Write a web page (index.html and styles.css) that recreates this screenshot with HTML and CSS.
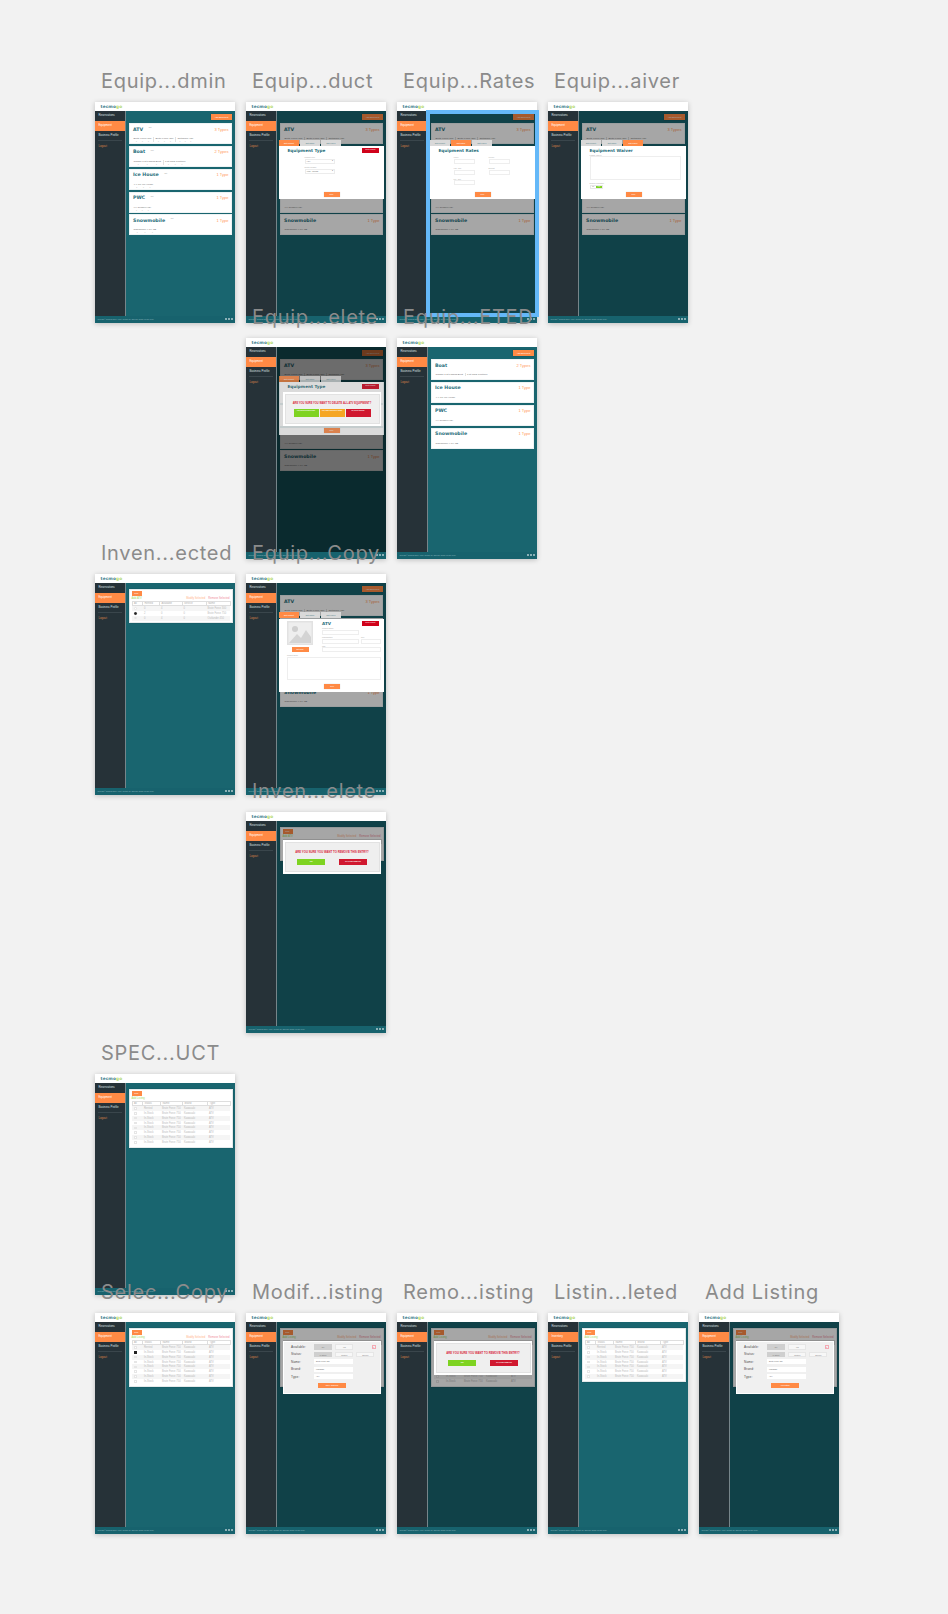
FILE: index.html
```html
<!DOCTYPE html>
<html lang="en">
<head>
<meta charset="utf-8">
<title>Artboards</title>
<link rel="stylesheet" href="styles.css">
</head>
<body>
<div class="canvas">

<article class="art r1 c1"><div class="lab">Equip...dmin</div><div class="board">
<div class="hdr"><span class="logo">tecmo<em>go</em></span></div>
<div class="body"><nav class="side"><a class="it">Reservations</a><a class="it on">Equipment</a><a class="it">Business Profile</a><hr><a class="it out">Logout</a></nav>
<main class="main"><div class="tool"><span class="add">Add Equipment</span></div>
<section class="card"><div class="ch"><h3>ATV <small>Edit</small></h3><b>3 Types</b></div><div class="items"><div class="item"><p>Brute Force 300</p><p class="num"><i>1</i><i>1</i><i>1</i></p></div><div class="item"><p>Brute Force 750</p><p class="num"><i>1</i><i>1</i><i>1</i></p></div><div class="item"><p>Outlander 450</p><p class="num"><i>1</i><i>1</i><i>1</i></p></div></div></section>
<section class="card"><div class="ch"><h3>Boat <small>Edit</small></h3><b>2 Types</b></div><div class="items"><div class="item"><p>Classic 14ft Fishing Boat</p><p class="num"><i>1</i><i>1</i><i>1</i></p></div><div class="item"><p>14ft PRO Pontoon</p><p class="num"><i>1</i><i>1</i><i>1</i></p></div></div></section>
<section class="card"><div class="ch"><h3>Ice House <small>Edit</small></h3><b>1 Type</b></div><div class="items"><div class="item"><p>4' x 10' Ice House</p><p class="num"><i>1</i><i>1</i><i>1</i></p></div></div></section>
<section class="card"><div class="ch"><h3>PWC <small>Edit</small></h3><b>1 Type</b></div><div class="items"><div class="item"><p>VX Cruiser(HO)</p><p class="num"><i>1</i><i>1</i><i>1</i></p></div></div></section>
<section class="card"><div class="ch"><h3>Snowmobile <small>Edit</small></h3><b>1 Type</b></div><div class="items"><div class="item"><p>Sidewinder X-TX SE</p><p class="num"><i>1</i><i>1</i><i>1</i></p></div></div></section>
</main></div>
<footer class="ftr"><span>Copyright © Tecmogo 2017 | About | Contact Us | Services | Terms | Privacy Policy</span><span class="dots"><i></i><i></i><i></i></span></footer></div></article>

<article class="art r1 c2"><div class="lab">Equip...duct</div><div class="board">
<div class="hdr"><span class="logo">tecmo<em>go</em></span></div>
<div class="body"><nav class="side"><a class="it">Reservations</a><a class="it on">Equipment</a><a class="it">Business Profile</a><hr><a class="it out">Logout</a></nav>
<main class="main"><div class="tool"><span class="add">Add Equipment</span></div>
<section class="card"><div class="ch"><h3>ATV</h3><b>3 Types</b></div><div class="items"><div class="item"><p>Brute Force 300</p></div><div class="item"><p>Brute Force 750</p></div><div class="item"><p>Outlander 450</p></div></div></section>
<section class="card"></section>
<section class="card"></section>
<section class="card"><div class="ch"></div><div class="items"><div class="item"><p>VX Cruiser(HO)</p></div></div></section>
<section class="card"><div class="ch"><h3>Snowmobile</h3><b>1 Type</b></div><div class="items"><div class="item"><p>Sidewinder X-TX SE</p></div></div></section>
<div class="dim"></div>
<div class="tabs"><span class="tab on">Edit Product</span><span class="tab">Edit Rates</span><span class="tab">Edit Waiver</span></div>
<div class="modal"><div class="mh"><h4>Equipment Type</h4><span class="del">Delete Product</span></div>
<div class="stack"><label>Product Type<span class="sel">ATV<u>▾</u></span></label><label>Rental Season<span class="sel">Year - Round<u>▾</u></span></label></div>
<span class="save">Save</span></div>
</main></div>
<footer class="ftr"><span>Copyright © Tecmogo 2017 | About | Contact Us | Services | Terms | Privacy Policy</span><span class="dots"><i></i><i></i><i></i></span></footer></div></article>

<article class="art r1 c3"><div class="lab">Equip...Rates</div><div class="board">
<div class="hdr"><span class="logo">tecmo<em>go</em></span></div>
<div class="body"><nav class="side"><a class="it">Reservations</a><a class="it on">Equipment</a><a class="it">Business Profile</a><hr><a class="it out">Logout</a></nav>
<main class="main"><div class="tool"><span class="add">Add Equipment</span></div>
<section class="card"><div class="ch"><h3>ATV</h3><b>3 Types</b></div><div class="items"><div class="item"><p>Brute Force 300</p></div><div class="item"><p>Brute Force 750</p></div><div class="item"><p>Outlander 450</p></div></div></section>
<section class="card"></section>
<section class="card"></section>
<section class="card"><div class="ch"></div><div class="items"><div class="item"><p>VX Cruiser(HO)</p></div></div></section>
<section class="card"><div class="ch"><h3>Snowmobile</h3><b>1 Type</b></div><div class="items"><div class="item"><p>Sidewinder X-TX SE</p></div></div></section>
<div class="dim"></div>
<div class="tabs"><span class="tab">Edit Product</span><span class="tab on">Edit Rates</span><span class="tab">Edit Waiver</span></div>
<div class="modal"><div class="mh"><h4>Equipment Rates</h4></div>
<div class="rates"><label>Hourly<span class="inp"></span></label><label>Weekly<span class="inp"></span></label><label>Half - Day<span class="inp"></span></label><label>Deposit<span class="inp"></span></label><label>Full - Day<span class="inp"></span></label></div>
<span class="save">Save</span></div>
</main></div>
<footer class="ftr"><span>Copyright © Tecmogo 2017 | About | Contact Us | Services | Terms | Privacy Policy</span><span class="dots"><i></i><i></i><i></i></span></footer></div></article>

<article class="art r1 c4"><div class="lab">Equip...aiver</div><div class="board">
<div class="hdr"><span class="logo">tecmo<em>go</em></span></div>
<div class="body"><nav class="side"><a class="it">Reservations</a><a class="it on">Equipment</a><a class="it">Business Profile</a><hr><a class="it out">Logout</a></nav>
<main class="main"><div class="tool"><span class="add">Add Equipment</span></div>
<section class="card"><div class="ch"><h3>ATV</h3><b>3 Types</b></div><div class="items"><div class="item"><p>Brute Force 300</p></div><div class="item"><p>Brute Force 750</p></div><div class="item"><p>Outlander 450</p></div></div></section>
<section class="card"></section>
<section class="card"></section>
<section class="card"><div class="ch"></div><div class="items"><div class="item"><p>VX Cruiser(HO)</p></div></div></section>
<section class="card"><div class="ch"><h3>Snowmobile</h3><b>1 Type</b></div><div class="items"><div class="item"><p>Sidewinder X-TX SE</p></div></div></section>
<div class="dim"></div>
<div class="tabs"><span class="tab">Edit Product</span><span class="tab">Edit Rates</span><span class="tab on">Edit Waiver</span></div>
<div class="modal"><div class="mh"><h4>Equipment Waiver</h4></div>
<div class="waiver"><label>Liability Waiver<span class="area"></span></label><label>Require Signature<span class="tog"><span>No</span><span class="yes">Yes</span></span></label></div>
<span class="save">Save</span></div>
</main></div>
<footer class="ftr"><span>Copyright © Tecmogo 2017 | About | Contact Us | Services | Terms | Privacy Policy</span><span class="dots"><i></i><i></i><i></i></span></footer></div></article>

<div class="frame"></div>

<article class="art r2 c2"><div class="lab">Equip...elete</div><div class="board">
<div class="hdr"><span class="logo">tecmo<em>go</em></span></div>
<div class="body"><nav class="side"><a class="it">Reservations</a><a class="it on">Equipment</a><a class="it">Business Profile</a><hr><a class="it out">Logout</a></nav>
<main class="main"><div class="tool"><span class="add">Add Equipment</span></div>
<section class="card"><div class="ch"><h3>ATV</h3><b>3 Types</b></div><div class="items"><div class="item"><p>Brute Force 300</p></div><div class="item"><p>Brute Force 750</p></div><div class="item"><p>Outlander 450</p></div></div></section>
<section class="card"></section>
<section class="card"></section>
<section class="card"><div class="ch"></div><div class="items"><div class="item"><p>VX Cruiser(HO)</p></div></div></section>
<section class="card"><div class="ch"><h3>Snowmobile</h3><b>1 Type</b></div><div class="items"><div class="item"><p>Sidewinder X-TX SE</p></div></div></section>
<div class="dim"></div><div class="dim"></div>
<div class="tabs faded"><span class="tab on">Edit Product</span><span class="tab">Edit Rates</span><span class="tab">Edit Waiver</span></div>
<div class="modal faded"><div class="mh"><h4>Equipment Type</h4><span class="del">Delete Product</span></div>
<span class="save">Save</span></div>
<div class="confirm three"><div class="in"><p>ARE YOU SURE YOU WANT TO DELETE ALL ATV EQUIPMENT?</p><div class="acts"><span class="g">YES, DELETE EVERYTHING</span><span class="o">YES, KEEP INDIVIDUAL ITEMS</span><span class="x">NO, DON'T DELETE</span></div></div></div>
</main></div>
<footer class="ftr"><span>Copyright © Tecmogo 2017 | About | Contact Us | Services | Terms | Privacy Policy</span><span class="dots"><i></i><i></i><i></i></span></footer></div></article>

<article class="art r2 c3"><div class="lab">Equip...ETED</div><div class="board">
<div class="hdr"><span class="logo">tecmo<em>go</em></span></div>
<div class="body"><nav class="side"><a class="it">Reservations</a><a class="it on">Equipment</a><a class="it">Business Profile</a><hr><a class="it out">Logout</a></nav>
<main class="main"><div class="tool"><span class="add">Add Equipment</span></div>
<section class="card"><div class="ch"><h3>Boat</h3><b>2 Types</b></div><div class="items"><div class="item"><p>Classic 14ft Fishing Boat</p></div><div class="item"><p>14ft PRO Pontoon</p></div></div></section>
<section class="card"><div class="ch"><h3>Ice House</h3><b>1 Type</b></div><div class="items"><div class="item"><p>4' x 10' Ice House</p></div></div></section>
<section class="card"><div class="ch"><h3>PWC</h3><b>1 Type</b></div><div class="items"><div class="item"><p>VX Cruiser(HO)</p></div></div></section>
<section class="card"><div class="ch"><h3>Snowmobile</h3><b>1 Type</b></div><div class="items"><div class="item"><p>Sidewinder X-TX SE</p></div></div></section>
</main></div>
<footer class="ftr"><span>Copyright © Tecmogo 2017 | About | Contact Us | Services | Terms | Privacy Policy</span><span class="dots"><i></i><i></i><i></i></span></footer></div></article>

<article class="art r3 c1"><div class="lab">Inven...ected</div><div class="board">
<div class="hdr"><span class="logo">tecmo<em>go</em></span></div>
<div class="body"><nav class="side"><a class="it">Reservations</a><a class="it on">Equipment</a><a class="it">Business Profile</a><hr><a class="it out">Logout</a></nav>
<main class="main mlist"><section class="sheet"><span class="back">Back</span>
<div class="ops"><span class="addl">Add ATV</span><span class="mod">Modify Selected</span><span class="rem">Remove Selected</span></div>
<table class="tbl"><tr><th>All</th><th>Rented</th><th>Available</th><th>Service</th><th>Name</th></tr>
<tr><td><i class="rad"></i></td><td>0</td><td>4</td><td>0</td><td>Brute Force 300</td></tr>
<tr><td><i class="rad sel-on"></i></td><td>2</td><td>0</td><td>0</td><td>Brute Force 750</td></tr>
<tr><td><i class="rad"></i></td><td>0</td><td>4</td><td>0</td><td>Outlander 450</td></tr></table></section></main></div>
<footer class="ftr"><span>Copyright © Tecmogo 2017 | About | Contact Us | Services | Terms | Privacy Policy</span><span class="dots"><i></i><i></i><i></i></span></footer></div></article>

<article class="art r3 c2"><div class="lab">Equip...Copy</div><div class="board">
<div class="hdr"><span class="logo">tecmo<em>go</em></span></div>
<div class="body"><nav class="side"><a class="it">Reservations</a><a class="it on">Equipment</a><a class="it">Business Profile</a><hr><a class="it out">Logout</a></nav>
<main class="main"><div class="tool"><span class="add">Add Equipment</span></div>
<section class="card"><div class="ch"><h3>ATV</h3><b>3 Types</b></div><div class="items"><div class="item"><p>Brute Force 300</p></div><div class="item"><p>Brute Force 750</p></div><div class="item"><p>Outlander 450</p></div></div></section>
<section class="card"></section>
<section class="card"></section>
<section class="card"></section>
<section class="card"><div class="ch"><h3>Snowmobile</h3><b>1 Type</b></div><div class="items"><div class="item"><p>Sidewinder X-TX SE</p></div></div></section>
<div class="dim"></div>
<div class="tabs"><span class="tab on">Edit Product</span><span class="tab">Edit Rates</span><span class="tab">Edit Waiver</span></div>
<div class="modal tall"><div class="prod"><div class="pic"><svg viewBox="0 0 26 24" class="ph"><rect width="26" height="24" fill="#e2e2e2"/><rect x="1.5" y="1.5" width="23" height="21" fill="#eeeeee"/><circle cx="8" cy="8" r="3" fill="#cfcfcf"/><path d="M2 22 L10 13 L14 17 L19 9 L24 16 V22 Z" fill="#d4d4d4"/></svg><span class="edit">Edit Image</span></div>
<div class="pform"><div class="mh"><h4>ATV</h4><span class="del">Delete Product</span></div>
<label>Product Name<span class="inp wide"></span></label>
<div class="two"><label>Manufacturer<span class="inp"></span></label><label>QTY<span class="inp"></span></label></div>
<label>URL<span class="inp"></span></label></div></div>
<label class="desc">Product Desc<span class="area"></span></label>
<span class="save">Save</span></div>
</main></div>
<footer class="ftr"><span>Copyright © Tecmogo 2017 | About | Contact Us | Services | Terms | Privacy Policy</span><span class="dots"><i></i><i></i><i></i></span></footer></div></article>

<article class="art r4 c2"><div class="lab">Inven...elete</div><div class="board">
<div class="hdr"><span class="logo">tecmo<em>go</em></span></div>
<div class="body"><nav class="side"><a class="it">Reservations</a><a class="it on">Equipment</a><a class="it">Business Profile</a><hr><a class="it out">Logout</a></nav>
<main class="main mlist"><section class="sheet"><span class="back">Back</span>
<div class="ops"><span class="addl">Add ATV</span><span class="mod">Modify Selected</span><span class="rem">Remove Selected</span></div>
<table class="tbl"><tr><th>All</th><th>Rented</th><th>Available</th><th>Service</th><th>Name</th></tr>
<tr><td></td><td></td><td></td><td></td><td></td></tr>
<tr><td></td><td></td><td></td><td></td><td></td></tr>
<tr><td></td><td></td><td></td><td></td><td></td></tr></table></section>
<div class="dim"></div>
<div class="confirm"><div class="in"><p>ARE YOU SURE YOU WANT TO REMOVE THIS ENTRY?</p><div class="acts"><span class="g">YES</span><span class="x">NO, DON'T REMOVE</span></div></div></div>
</main></div>
<footer class="ftr"><span>Copyright © Tecmogo 2017 | About | Contact Us | Services | Terms | Privacy Policy</span><span class="dots"><i></i><i></i><i></i></span></footer></div></article>

<article class="art r5 c1"><div class="lab">SPEC...UCT</div><div class="board">
<div class="hdr"><span class="logo">tecmo<em>go</em></span></div>
<div class="body"><nav class="side"><a class="it">Reservations</a><a class="it on">Equipment</a><a class="it">Business Profile</a><hr><a class="it out">Logout</a></nav>
<main class="main mlist"><section class="sheet"><span class="back">Back</span>
<div class="ops"><span class="addl">Add Listing</span></div>
<table class="tbl list"><tr><th>All</th><th>Status</th><th>Name</th><th>Brand</th><th>Type</th></tr>
<tr><td><i class="rad"></i></td><td>Rented</td><td>Brute Force 750</td><td>Kawasaki</td><td>ATV</td></tr>
<tr><td><i class="rad"></i></td><td>In-Stock</td><td>Brute Force 750</td><td>Kawasaki</td><td>ATV</td></tr>
<tr><td><i class="rad"></i></td><td>In-Stock</td><td>Brute Force 750</td><td>Kawasaki</td><td>ATV</td></tr>
<tr><td><i class="rad"></i></td><td>In-Stock</td><td>Brute Force 750</td><td>Kawasaki</td><td>ATV</td></tr>
<tr><td><i class="rad"></i></td><td>In-Stock</td><td>Brute Force 750</td><td>Kawasaki</td><td>ATV</td></tr>
<tr><td><i class="rad"></i></td><td>In-Stock</td><td>Brute Force 750</td><td>Kawasaki</td><td>ATV</td></tr>
<tr><td><i class="rad"></i></td><td>In-Stock</td><td>Brute Force 750</td><td>Kawasaki</td><td>ATV</td></tr>
<tr><td><i class="rad"></i></td><td>In-Stock</td><td>Brute Force 750</td><td>Kawasaki</td><td>ATV</td></tr></table></section></main></div>
<footer class="ftr"><span>Copyright © Tecmogo 2017 | About | Contact Us | Services | Terms | Privacy Policy</span><span class="dots"><i></i><i></i><i></i></span></footer></div></article>

<article class="art r6 c1"><div class="lab">Selec...Copy</div><div class="board">
<div class="hdr"><span class="logo">tecmo<em>go</em></span></div>
<div class="body"><nav class="side"><a class="it">Reservations</a><a class="it on">Equipment</a><a class="it">Business Profile</a><hr><a class="it out">Logout</a></nav>
<main class="main mlist"><section class="sheet"><span class="back">Back</span>
<div class="ops"><span class="addl">Add Listing</span><span class="mod">Modify Selected</span><span class="rem">Remove Selected</span></div>
<table class="tbl list"><tr><th>All</th><th>Status</th><th>Name</th><th>Brand</th><th>Type</th></tr>
<tr><td><i class="rad"></i></td><td>Rented</td><td>Brute Force 750</td><td>Kawasaki</td><td>ATV</td></tr>
<tr><td><i class="rad sel-on"></i></td><td>In-Stock</td><td>Brute Force 750</td><td>Kawasaki</td><td>ATV</td></tr>
<tr><td><i class="rad"></i></td><td>In-Stock</td><td>Brute Force 750</td><td>Kawasaki</td><td>ATV</td></tr>
<tr><td><i class="rad"></i></td><td>In-Stock</td><td>Brute Force 750</td><td>Kawasaki</td><td>ATV</td></tr>
<tr><td><i class="rad"></i></td><td>In-Stock</td><td>Brute Force 750</td><td>Kawasaki</td><td>ATV</td></tr>
<tr><td><i class="rad"></i></td><td>In-Stock</td><td>Brute Force 750</td><td>Kawasaki</td><td>ATV</td></tr>
<tr><td><i class="rad"></i></td><td>In-Stock</td><td>Brute Force 750</td><td>Kawasaki</td><td>ATV</td></tr>
<tr><td><i class="rad"></i></td><td>In-Stock</td><td>Brute Force 750</td><td>Kawasaki</td><td>ATV</td></tr></table></section></main></div>
<footer class="ftr"><span>Copyright © Tecmogo 2017 | About | Contact Us | Services | Terms | Privacy Policy</span><span class="dots"><i></i><i></i><i></i></span></footer></div></article>

<article class="art r6 c2"><div class="lab">Modif...isting</div><div class="board">
<div class="hdr"><span class="logo">tecmo<em>go</em></span></div>
<div class="body"><nav class="side"><a class="it">Reservations</a><a class="it on">Equipment</a><a class="it">Business Profile</a><hr><a class="it out">Logout</a></nav>
<main class="main mlist"><section class="sheet"><span class="back">Back</span>
<div class="ops"><span class="addl">Add Listing</span><span class="mod">Modify Selected</span><span class="rem">Remove Selected</span></div>
<table class="tbl list"><tr><th></th><th></th><th></th><th></th><th></th></tr>
<tr><td></td><td></td><td></td><td></td><td></td></tr>
<tr><td></td><td></td><td></td><td></td><td></td></tr>
<tr><td></td><td></td><td></td><td></td><td></td></tr>
<tr><td></td><td></td><td></td><td></td><td></td></tr>
<tr><td></td><td></td><td></td><td></td><td></td></tr>
<tr><td></td><td></td><td></td><td></td><td></td></tr>
<tr><td></td><td></td><td></td><td></td><td></td></tr>
<tr><td></td><td></td><td></td><td></td><td></td></tr></table></section>
<div class="dim"></div>
<div class="editbox"><span class="close">×</span>
<div class="row"><span class="k">Available:</span><span class="opt on">No</span><span class="opt">Yes</span></div>
<div class="row"><span class="k">Status:</span><span class="opt on">In-Stock</span><span class="opt">Rented</span><span class="opt">Service</span></div>
<div class="row"><span class="k">Name:</span><span class="val">Brute Force 750</span></div>
<div class="row"><span class="k">Brand:</span><span class="val">Kawasaki</span></div>
<div class="row"><span class="k">Type:</span><span class="val">ATV</span></div>
<span class="go">Save Changes</span></div>
</main></div>
<footer class="ftr"><span>Copyright © Tecmogo 2017 | About | Contact Us | Services | Terms | Privacy Policy</span><span class="dots"><i></i><i></i><i></i></span></footer></div></article>

<article class="art r6 c3"><div class="lab">Remo...isting</div><div class="board">
<div class="hdr"><span class="logo">tecmo<em>go</em></span></div>
<div class="body"><nav class="side"><a class="it">Reservations</a><a class="it on">Equipment</a><a class="it">Business Profile</a><hr><a class="it out">Logout</a></nav>
<main class="main mlist"><section class="sheet"><span class="back">Back</span>
<div class="ops"><span class="addl">Add Listing</span><span class="mod">Modify Selected</span><span class="rem">Remove Selected</span></div>
<table class="tbl list"><tr><th></th><th></th><th></th><th></th><th></th></tr>
<tr><td></td><td></td><td></td><td></td><td></td></tr>
<tr><td></td><td></td><td></td><td></td><td></td></tr>
<tr><td></td><td></td><td></td><td></td><td></td></tr>
<tr><td></td><td></td><td></td><td></td><td></td></tr>
<tr><td></td><td></td><td></td><td></td><td></td></tr>
<tr><td></td><td></td><td></td><td></td><td></td></tr>
<tr><td><i class="rad"></i></td><td>In-Stock</td><td>Brute Force 750</td><td>Kawasaki</td><td>ATV</td></tr>
<tr><td><i class="rad"></i></td><td>In-Stock</td><td>Brute Force 750</td><td>Kawasaki</td><td>ATV</td></tr></table></section>
<div class="dim"></div>
<div class="confirm"><div class="in"><p>ARE YOU SURE YOU WANT TO REMOVE THIS ENTRY?</p><div class="acts"><span class="g">YES</span><span class="x">NO, DON'T REMOVE</span></div></div></div>
</main></div>
<footer class="ftr"><span>Copyright © Tecmogo 2017 | About | Contact Us | Services | Terms | Privacy Policy</span><span class="dots"><i></i><i></i><i></i></span></footer></div></article>

<article class="art r6 c4"><div class="lab">Listin...leted</div><div class="board">
<div class="hdr"><span class="logo">tecmo<em>go</em></span></div>
<div class="body"><nav class="side"><a class="it">Reservations</a><a class="it on">Inventory</a><a class="it">Business Profile</a><hr><a class="it out">Logout</a></nav>
<main class="main mlist"><section class="sheet"><span class="back">Back</span>
<div class="ops"><span class="addl">Add Listing</span></div>
<table class="tbl list"><tr><th>All</th><th>Status</th><th>Name</th><th>Brand</th><th>Type</th></tr>
<tr><td><i class="rad"></i></td><td>Rented</td><td>Brute Force 750</td><td>Kawasaki</td><td>ATV</td></tr>
<tr><td><i class="rad"></i></td><td>In-Stock</td><td>Brute Force 750</td><td>Kawasaki</td><td>ATV</td></tr>
<tr><td><i class="rad"></i></td><td>In-Stock</td><td>Brute Force 750</td><td>Kawasaki</td><td>ATV</td></tr>
<tr><td><i class="rad"></i></td><td>In-Stock</td><td>Brute Force 750</td><td>Kawasaki</td><td>ATV</td></tr>
<tr><td><i class="rad"></i></td><td>In-Stock</td><td>Brute Force 750</td><td>Kawasaki</td><td>ATV</td></tr>
<tr><td><i class="rad"></i></td><td>In-Stock</td><td>Brute Force 750</td><td>Kawasaki</td><td>ATV</td></tr>
<tr><td><i class="rad"></i></td><td>In-Stock</td><td>Brute Force 750</td><td>Kawasaki</td><td>ATV</td></tr></table></section></main></div>
<footer class="ftr"><span>Copyright © Tecmogo 2017 | About | Contact Us | Services | Terms | Privacy Policy</span><span class="dots"><i></i><i></i><i></i></span></footer></div></article>

<article class="art r6 c5"><div class="lab">Add Listing</div><div class="board">
<div class="hdr"><span class="logo">tecmo<em>go</em></span></div>
<div class="body"><nav class="side"><a class="it">Reservations</a><a class="it on">Equipment</a><a class="it">Business Profile</a><hr><a class="it out">Logout</a></nav>
<main class="main mlist"><section class="sheet"><span class="back">Back</span>
<div class="ops"><span class="addl">Add Listing</span><span class="mod">Modify Selected</span><span class="rem">Remove Selected</span></div>
<table class="tbl list"><tr><th></th><th></th><th></th><th></th><th></th></tr>
<tr><td></td><td></td><td></td><td></td><td></td></tr>
<tr><td></td><td></td><td></td><td></td><td></td></tr>
<tr><td></td><td></td><td></td><td></td><td></td></tr>
<tr><td></td><td></td><td></td><td></td><td></td></tr>
<tr><td></td><td></td><td></td><td></td><td></td></tr>
<tr><td></td><td></td><td></td><td></td><td></td></tr>
<tr><td></td><td></td><td></td><td></td><td></td></tr>
<tr><td></td><td></td><td></td><td></td><td></td></tr></table></section>
<div class="dim"></div>
<div class="editbox"><span class="close">×</span>
<div class="row"><span class="k">Available:</span><span class="opt on">No</span><span class="opt">Yes</span></div>
<div class="row"><span class="k">Status:</span><span class="opt on">In-Stock</span><span class="opt">Rented</span><span class="opt">Service</span></div>
<div class="row"><span class="k">Name:</span><span class="val">Brute Force 750</span></div>
<div class="row"><span class="k">Brand:</span><span class="val">Kawasaki</span></div>
<div class="row"><span class="k">Type:</span><span class="val">ATV</span></div>
<span class="go">Add Listing</span></div>
</main></div>
<footer class="ftr"><span>Copyright © Tecmogo 2017 | About | Contact Us | Services | Terms | Privacy Policy</span><span class="dots"><i></i><i></i><i></i></span></footer></div></article>

</div>
</body>
</html>
```

FILE: styles.css
```css
* { box-sizing: border-box; margin: 0; padding: 0; }
html, body { width: 948px; height: 1614px; overflow: hidden; }
body { background: #f2f2f2; font-family: "Liberation Sans", Arial, sans-serif; }
.canvas { position: relative; width: 948px; height: 1614px; overflow: hidden; }

/* Artboards sit on a free canvas */
.art { position: absolute; width: 140px; }
.c1 { left: 95px; } .c2 { left: 246px; } .c3 { left: 397px; } .c4 { left: 548px; } .c5 { left: 699px; }
.r1 { top: 69px; } .r2 { top: 305px; } .r3 { top: 541px; } .r4 { top: 779px; } .r5 { top: 1041px; } .r6 { top: 1280px; }

.lab { height: 33px; line-height: 24px; padding-left: 6px; white-space: nowrap; font-family: Inter, sans-serif; font-size: 20px; color: #8b8b8b; letter-spacing: .72px; }
.board { width: 140px; height: 220.5px; display: flex; flex-direction: column; overflow: hidden; background: #19656f; box-shadow: 0 1px 5px rgba(0,0,0,.22); }

.frame { position: absolute; left: 426px; top: 110px; width: 113px; height: 207px; border: 4.5px solid #64b8f8; }

.hdr { height: 9px; flex: none; background: #fff; display: flex; align-items: center; padding-left: 5.5px; }
.logo { font: 700 4.3px "DejaVu Sans", sans-serif; color: #3f808d; letter-spacing: .1px; }
.logo em { font-style: normal; color: #b3d86a; }

.body { flex: 1; display: flex; min-height: 0; }
.side { width: 31px; flex: none; background: #263238; border-right: 1px solid #76858a; }
.it { display: block; height: 9.9px; line-height: 9.9px; padding-left: 3.4px; font-size: 2.8px; font-weight: 400; color: #dde1e2; white-space: nowrap; }
.it.on { background: #ff8a45; color: #fff; }
.it.out { color: #d98449; margin-top: 1.5px; }
.side hr { border: 0; height: 1px; background: #3a464c; margin: -1px 3px 1px 3px; }

.main { flex: 1; position: relative; min-width: 0; background: #19656f; padding: 3px 3px 0 2.5px; display: flex; flex-direction: column; gap: 1.8px; }
.tool { display: flex; justify-content: flex-end; height: 6px; margin-bottom: 1.4px; }
.add { width: 21px; height: 6px; line-height: 6px; background: #ff8a45; color: #fff; font-size: 2px; text-align: center; white-space: nowrap; box-shadow: 0 0 1px rgba(0,0,0,.3); }

.card { height: 21px; flex: none; background: #fff; padding: 2.5px 2.5px 0 3.5px; border: 1px solid #eef3f4; }
.ch { display: flex; justify-content: space-between; align-items: flex-start; height: 8.5px; }
.ch h3 { font: 700 4.7px/5.5px "DejaVu Sans", sans-serif; color: #2a6f7c; white-space: nowrap; }
.ch h3 small { font: 400 1.6px "Liberation Sans", sans-serif; color: #aaa; vertical-align: 2.5px; margin-left: 4px; }
.ch b { font-size: 4px; line-height: 5.5px; font-weight: 400; color: #ff9a5c; white-space: nowrap; }
.items { display: flex; margin-top: 2px; }
.item { padding: 0 1.5px 0 .5px; margin-right: 1px; border-right: 1px solid #e2e2e2; font-size: 2.5px; color: #707070; white-space: nowrap; }
.item:last-child { border-right: 0; }
.num { display: flex; justify-content: space-around; margin-top: 1px; font-size: 1.6px; color: #aaa; }
.num i { font-style: normal; }

.ftr { height: 6.5px; flex: none; background: #17626d; color: #9cc0c5; font-size: 1.55px; display: flex; align-items: center; justify-content: space-between; padding: 0 2px 0 2.5px; white-space: nowrap; }
.dots { display: flex; gap: 1px; opacity: .75; }
.dots i { width: 2px; height: 2px; border-radius: 50%; background: #e6eef0; }

.dim { position: absolute; inset: 0; background: rgba(0,0,0,.35); }

.tabs { position: absolute; left: 2px; top: 29px; display: flex; gap: 1px; }
.tab { width: 20px; height: 6px; line-height: 6px; background: #d9d9d9; color: #4d7f88; font-size: 1.8px; text-align: center; white-space: nowrap; }
.tab.on { background: #ff8a45; color: #fff; }

.modal { position: absolute; left: 2px; top: 35px; width: 105px; height: 53px; background: #fff; padding: 2.2px 5px 2.5px 8.5px; display: flex; flex-direction: column; color: #a8a8a8; font-size: 1.8px; }
.modal.tall { top: 35.7px; height: 73.3px; padding: 2.5px 3px 3px 8px; }
.faded { opacity: .76; }
.mh { display: flex; justify-content: space-between; align-items: center; height: 5px; flex: none; }
.mh h4 { font: 700 4.2px/5px "DejaVu Sans", sans-serif; color: #2a6f7c; white-space: nowrap; }
.del { width: 17px; height: 4.4px; line-height: 4.4px; background: #d0021b; color: #fff; font-size: 1.5px; text-align: center; white-space: nowrap; }
.save { align-self: center; width: 16px; height: 5px; line-height: 5px; background: #ff8a45; color: #fff; font-size: 1.7px; text-align: center; margin-top: auto; margin-left: -3.5px; box-shadow: 0 0 1px rgba(0,0,0,.2); }
label { display: block; white-space: nowrap; line-height: 2.2px; }
.stack { display: flex; flex-direction: column; gap: 2.5px; margin: 3px 0 0 17px; width: 30px; }
.sel { display: flex; justify-content: space-between; align-items: center; height: 5px; margin-top: .5px; border: 1px solid #ececec; padding: 0 1px; color: #666; font-size: 2px; }
.sel u { text-decoration: none; font-size: 1.5px; }
.inp { display: block; height: 5px; margin-top: .5px; border: 1px solid #eeeeee; background: #fff; }
.rates { display: grid; grid-template-columns: 21px 21px; column-gap: 14px; row-gap: 3px; margin: 3px 0 0 15px; }
.waiver { margin-top: .5px; display: flex; flex-direction: column; gap: 2.5px; }
.area { display: block; height: 23.5px; margin-top: .5px; border: 1px solid #eeeeee; }
.tog { display: flex; width: 13px; height: 3.6px; margin-top: .5px; border: 1px solid #e8e8e8; color: #777; font-size: 1.4px; text-align: center; line-height: 1.8px; }
.tog span { flex: 1; }
.tog .yes { background: #7ed321; color: #fff; }

.prod { display: flex; gap: 9px; }
.pic { width: 26px; flex: none; display: flex; flex-direction: column; align-items: center; gap: 2px; }
.ph { width: 26px; height: 24px; display: block; }
.edit { width: 17px; height: 5px; line-height: 5px; background: #ff8a45; color: #fff; text-align: center; font-size: 1.5px; white-space: nowrap; }
.pform { flex: 1; min-width: 0; display: flex; flex-direction: column; gap: 1px; }
.pform .mh { margin-right: 2px; }
.two { display: grid; grid-template-columns: 37px 1fr; gap: 2px; }
.inp.wide { width: 37px; }
.desc { margin-top: 1.5px; }
.desc .area { height: 23px; }

.confirm { position: absolute; left: 6px; top: 19px; width: 98px; height: 33.5px; background: #fff; padding: 1.5px; }
.confirm.three { top: 45px; }
.in { height: 100%; background: #efefef; border: 1px solid #e2e2e2; display: flex; flex-direction: column; align-items: center; padding-top: 8.5px; }
.in p { font-size: 2.8px; line-height: 3px; font-weight: 700; color: #d81e3c; white-space: nowrap; }
.acts { display: flex; gap: 14px; margin-top: 5px; }
.acts span { width: 28px; height: 6px; line-height: 6px; color: #fff; font-size: 1.6px; font-weight: 700; text-align: center; white-space: nowrap; }
.g { background: #7ed321; } .o { background: #f5a623; } .x { background: #d0182f; }
.three .in { padding-top: 7px; }
.three .in p { font-size: 2.6px; }
.three .acts { gap: 1px; margin-top: 4px; }
.three .acts span { width: 25px; height: 8.4px; line-height: 1.25; font-size: 1.4px; white-space: normal; padding: 1.5px 2px 0; }

.mlist { padding: 5.5px 2.5px 0 3px; }
.sheet { background: #fff; padding: 1px 1px 1.5px 1.5px; border: 1px solid #e4eaeb; box-shadow: 0 0 1px rgba(0,0,0,.3); }
.back { display: block; width: 10px; height: 5px; line-height: 5px; background: #ff8a45; color: #fff; font-size: 1.7px; text-align: center; }
.ops { display: flex; height: 5px; align-items: center; font-size: 2.7px; white-space: nowrap; gap: 3px; padding-right: 1px; }
.addl { color: #a5d86a; margin-right: auto; }
.mod { color: #ffb48a; }
.rem { color: #f08a9a; }

.tbl { width: 100%; border-collapse: collapse; table-layout: fixed; font-size: 2.6px; color: #bababa; }
.tbl tr { height: 4.9px; }
.tbl tr:nth-child(odd) td { background: #fff; }
.tbl tr:nth-child(even) td { background: #f5f5f5; }
.tbl th { font-weight: 400; text-align: left; padding-left: 1.5px; border: 1px solid #dedede; color: #b0b0b0; white-space: nowrap; overflow: hidden; }
.tbl td { padding-left: 1.5px; white-space: nowrap; overflow: hidden; line-height: 3px; }
.tbl th:nth-child(1) { width: 10.5px; } .tbl th:nth-child(2) { width: 17px; } .tbl th:nth-child(3) { width: 22.5px; } .tbl th:nth-child(4) { width: 24px; }
.tbl tr td:nth-child(1) { padding-left: 2.2px; }
.rad { display: block; width: 2.6px; height: 2.6px; border: 1px solid #e6e6e6; border-radius: 50%; background: #fff; }
.rad.sel-on { background: #222; border-color: #222; }
.tbl.list .rad { border-radius: 0; }
.tbl.list th:nth-child(2) { width: 18px; } .tbl.list th:nth-child(3) { width: 22px; } .tbl.list th:nth-child(4) { width: 25px; }

.editbox { position: absolute; left: 6px; top: 18.7px; width: 98px; height: 53.5px; background: #f0f0f0; border: 1px solid #fff; padding: 2.5px 0 0 7px; display: flex; flex-direction: column; gap: 1.9px; color: #4a4a4a; }
.row { display: flex; align-items: center; height: 5.6px; }
.k { width: 23px; flex: none; font-size: 3.2px; letter-spacing: .12px; }
.opt { width: 18px; height: 5.2px; line-height: 4.6px; margin-right: 3.2px; background: #f7f7f7; border: 1px solid #e6e6e6; text-align: center; font-size: 1.9px; color: #777; }
.opt.on { background: #cfcfcf; border-color: #cfcfcf; }
.val { width: 39px; height: 5px; line-height: 5px; background: #fff; padding-left: 2px; font-size: 1.9px; color: #666; }
.close { position: absolute; right: 4.5px; top: 3px; width: 4px; height: 4px; line-height: 2.4px; border: 1px solid #f4aab4; text-align: center; font-size: 2.2px; color: #c9384a; }
.go { width: 28px; height: 5.8px; line-height: 5.8px; margin: 1px 0 0 27px; background: #ff8a45; color: #fff; text-align: center; font-size: 1.9px; }
```
